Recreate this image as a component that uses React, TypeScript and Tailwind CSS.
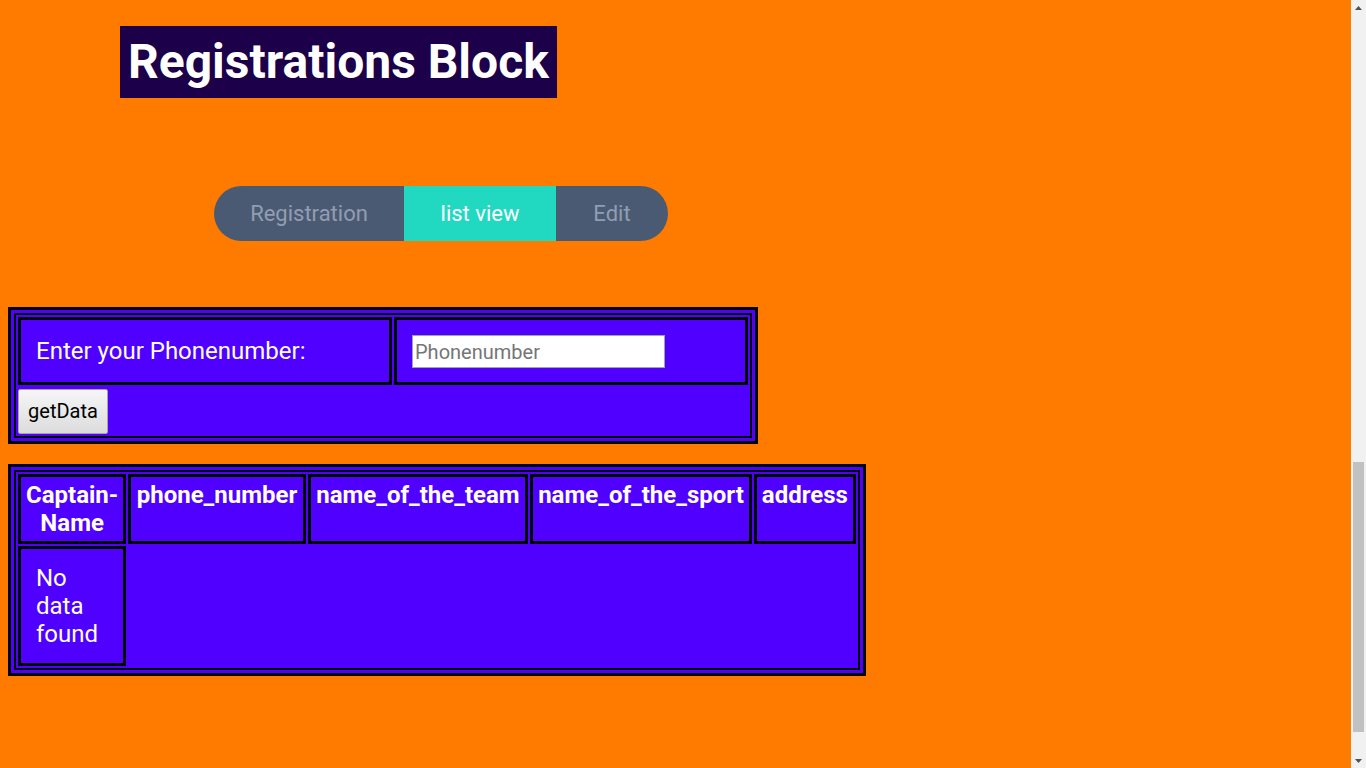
export default function App() {
  const th =
    "border-[3px] border-black p-1 align-top text-center text-[24px] font-bold leading-[28px] text-white";

  return (
    <div className="flex h-screen overflow-hidden bg-[#ff7b00] font-['Roboto',sans-serif]">
      <main className="min-w-0 flex-1 pt-[26px]">
        <div className="ml-[120px]">
          <h1 className="inline-block bg-[#1c0049] p-2 text-[48px] font-bold leading-[56px] text-white">
            Registrations Block
          </h1>
        </div>

        <div className="ml-[214px] mt-[88px] flex">
          <div className="flex h-[55px] overflow-hidden rounded-full bg-[#4b5a73] text-[22px] leading-[26px]">
            <div className="flex w-[190px] items-center justify-center text-[#929db2]">
              Registration
            </div>
            <div className="flex w-[152px] items-center justify-center bg-[#21d8c1] text-white">
              list view
            </div>
            <div className="flex w-[112px] items-center justify-center text-[#929db2]">
              Edit
            </div>
          </div>
        </div>

        <div className="ml-2 mt-[66px] w-[750px] border-[3px] border-black bg-[#5000ff] p-[3px]">
          <table className="w-full table-fixed border-separate border-spacing-[2px] border-2 border-black">
            <tbody>
              <tr>
                <td className="w-[374px] border-[3px] border-black px-[15px] align-middle text-[24px] leading-[28px] text-white">
                  Enter your Phonenumber:
                </td>
                <td className="w-[354px] border-[3px] border-black px-[15px] pt-[15px] pb-[14px] align-middle">
                  <input
                    type="text"
                    placeholder="Phonenumber"
                    className="block h-[33px] w-[253px] border border-[#a3a3a3] bg-white px-[2px] text-[20px] leading-[23px] text-black outline-none placeholder:text-[#757575]"
                  />
                </td>
              </tr>
              <tr>
                <td colSpan={2} className="p-0 pt-[2px]">
                  <button className="block h-[45px] w-[90px] rounded-[2px] border border-[#a6a6a6] bg-linear-to-b from-[#f6f6f6] to-[#dcdcdc] text-[20px] leading-[23px] text-black">
                    getData
                  </button>
                </td>
              </tr>
            </tbody>
          </table>
        </div>

        <div className="ml-2 mt-[20px] w-[858px] border-[3px] border-black bg-[#5000ff] p-[3px]">
          <table className="w-full table-fixed border-separate border-spacing-[2px] border-2 border-black">
            <thead>
              <tr>
                <th className={`w-[108px] ${th}`}>Captain-Name</th>
                <th className={`w-[177px] ${th}`}>phone_number</th>
                <th className={`w-[220px] ${th}`}>name_of_the_team</th>
                <th className={`w-[221px] ${th}`}>name_of_the_sport</th>
                <th className={`w-[102px] ${th}`}>address</th>
              </tr>
            </thead>
            <tbody>
              <tr>
                <td className="border-[3px] border-black p-[15px] text-left align-middle text-[24px] leading-[28px] text-white">
                  No data found
                </td>
              </tr>
            </tbody>
          </table>
        </div>
      </main>

      <aside className="flex w-[15px] shrink-0 flex-col bg-[#f1f1f1]">
        <div className="flex h-[15px] items-center justify-center">
          <svg width="7" height="4" viewBox="0 0 7 4" className="block">
            <polygon points="3.5,0 7,4 0,4" fill="#505050" />
          </svg>
        </div>
        <div className="flex flex-1 flex-col items-center pt-[447px]">
          <div className="h-[270px] w-[11px] bg-[#c1c1c1]" />
        </div>
        <div className="flex h-[15px] items-center justify-center">
          <svg width="7" height="4" viewBox="0 0 7 4" className="block">
            <polygon points="0,0 7,0 3.5,4" fill="#505050" />
          </svg>
        </div>
      </aside>
    </div>
  );
}
